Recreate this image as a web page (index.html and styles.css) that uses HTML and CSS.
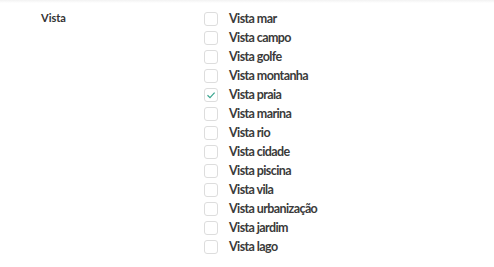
FILE: index.html
```html
<!DOCTYPE html>
<html>
<head>
<meta charset="utf-8">
<link rel="stylesheet" href="styles.css">
</head>
<body>
<div class="topbar"></div>
<div class="field">
  <div class="label">Vista</div>
  <ul class="options">
    <li><span class="box"></span><span class="txt">Vista mar</span></li>
    <li><span class="box"></span><span class="txt">Vista campo</span></li>
    <li><span class="box"></span><span class="txt">Vista golfe</span></li>
    <li><span class="box"></span><span class="txt">Vista montanha</span></li>
    <li><span class="box checked"><svg viewBox="0 0 14 14" width="14" height="14"><path d="M3.5 7.2 L6 9.6 L10.6 4.6" fill="none" stroke="#3aa58f" stroke-width="1.2"/></svg></span><span class="txt">Vista praia</span></li>
    <li><span class="box"></span><span class="txt">Vista marina</span></li>
    <li><span class="box"></span><span class="txt">Vista rio</span></li>
    <li><span class="box"></span><span class="txt">Vista cidade</span></li>
    <li><span class="box"></span><span class="txt">Vista piscina</span></li>
    <li><span class="box"></span><span class="txt">Vista vila</span></li>
    <li><span class="box"></span><span class="txt">Vista urbanização</span></li>
    <li><span class="box"></span><span class="txt">Vista jardim</span></li>
    <li><span class="box"></span><span class="txt">Vista lago</span></li>
  </ul>
</div>
</body>
</html>
```
FILE: styles.css
```css
html, body {
  margin: 0;
  padding: 0;
  background: #fff;
}
body {
  font-family: Lato, "Open Sans", sans-serif;
  color: #333;
  width: 494px;
  height: 267px;
  overflow: hidden;
}
.topbar {
  height: 3px;
  background: linear-gradient(#f2f2f2, #fff);
}
.field {
  display: flex;
  padding-top: 6px;
}
.label {
  width: 163px;
  padding-left: 41px;
  font-size: 11px;
  font-weight: 700;
  line-height: 18px;
}
.options {
  list-style: none;
  margin: 0;
  padding: 0;
}
.options li {
  display: flex;
  align-items: center;
  height: 19px;
}
.box {
  box-sizing: border-box;
  width: 14px;
  height: 14px;
  border: 1px solid #ddd;
  border-radius: 3px;
  background: #fff;
  margin-right: 11px;
  display: flex;
  align-items: center;
  justify-content: center;
}
.box svg {
  display: block;
  margin: -1px;
}
.txt {
  font-size: 12.5px;
  font-weight: 700;
  color: #3a3a3a;
  letter-spacing: -0.6px;
  word-spacing: 0px;
}
```
